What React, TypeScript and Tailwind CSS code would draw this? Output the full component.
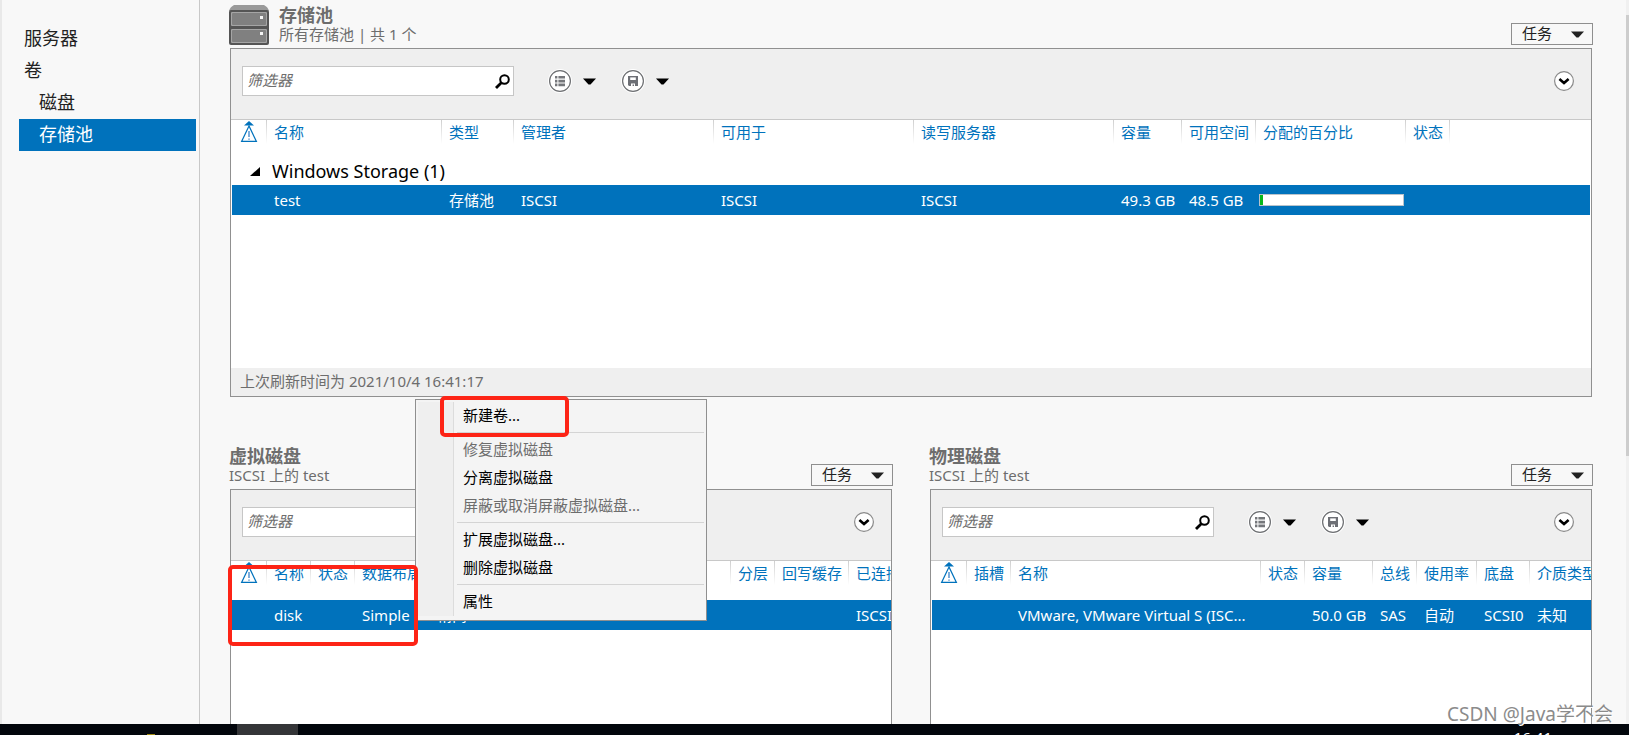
import { ReactNode } from 'react';

type Column = { label: ReactNode; width: string };

type PaneProps = {
  title: string;
  subtitle: string;
  icon?: ReactNode;
  children: ReactNode;
  footer?: string;
  className?: string;
};

/* Small drawings */

function Caret() {
  return (
    <svg viewBox="0 0 13 7" className="h-[7px] w-[13px] shrink-0" fill="currentColor" aria-hidden="true">
      <path d="M0 .5h13L7.500 6.500h-2z" />
    </svg>
  );
}

function SearchIcon() {
  return (
    <svg viewBox="0 0 15 15" className="h-[15px] w-[15px]" fill="none" stroke="#000" aria-hidden="true">
      <circle cx="9.500" cy="5.500" r="4.300" strokeWidth="2" />
      <path d="M6.300 8.700L1 14" strokeWidth="2.800" />
    </svg>
  );
}

function ListIcon() {
  return (
    <svg viewBox="0 0 24 24" className="h-6 w-6" aria-hidden="true">
      <circle cx="12" cy="12" r="12" fill="#fff" />
      <circle cx="12" cy="12" r="10.400" fill="#fff" stroke="#6d6f72" strokeWidth="1.200" />
      <g fill="#75777b">
        <path d="M7 7h2.400v2.600H7zM7 10.800h2.400v2.600H7zM7 14.600h2.400v2.600H7z" />
        <path d="M10.400 7H17v2.600h-6.600zM10.400 10.800H17v2.600h-6.600zM10.400 14.600H17v2.600h-6.600z" />
      </g>
    </svg>
  );
}

function SaveIcon() {
  return (
    <svg viewBox="0 0 24 24" className="h-6 w-6" aria-hidden="true">
      <circle cx="12" cy="12" r="12" fill="#fff" />
      <circle cx="12" cy="12" r="10.400" fill="#fff" stroke="#6d6f72" strokeWidth="1.200" />
      <path d="M7 7h10v10H8l-1-1z" fill="#6d6f75" />
      <path d="M9.200 8.400h5.600v2.600H9.200z" fill="#fff" />
      <path d="M10 14.400h4V17h-1v-1.400h-1.400V17H10z" fill="#fff" />
    </svg>
  );
}

function ExpandIcon() {
  return (
    <svg viewBox="0 0 22 22" className="h-[22px] w-[22px]" aria-hidden="true">
      <circle cx="11" cy="11" r="9.400" fill="#fff" stroke="#8a8a8a" strokeWidth="1.200" />
      <path d="M6.400 9l4.600 4 4.600-4" fill="none" stroke="#000" strokeWidth="2.600" />
    </svg>
  );
}

function WarningIcon() {
  return (
    <svg viewBox="0 0 18 22" className="block h-[22px] w-[18px]" role="img" aria-label="警告">
      <path d="M9 0l5 4.600H4z" fill="#0072bc" />
      <path d="M9 5L1.600 20.400h14.800z" fill="#fff" stroke="#0072bc" strokeWidth="1.200" />
      <path d="M9 10v6M9 17.400v1.400" stroke="#3b83c9" strokeWidth="1.300" />
    </svg>
  );
}

function PoolIcon() {
  return (
    <svg viewBox="0 0 40 40" className="h-10 w-10 shrink-0" aria-hidden="true">
      <path d="M5 0h30q4 2 5 6H0Q1 2 5 0z" fill="#9a9a9a" />
      <rect x="0" y="5" width="40" height="35" rx="2" fill="#555" />
      <rect x="2" y="7" width="36" height="14" rx="1" fill="#a5a5a5" />
      <rect x="3" y="8" width="34" height="12" rx="1" fill="#808080" />
      <rect x="2" y="24" width="36" height="14" rx="1" fill="#a5a5a5" />
      <rect x="3" y="25" width="34" height="12" rx="1" fill="#808080" />
      <path d="M31 11h3v3h-3zM31 27h3v3h-3z" fill="#f4f4f4" />
    </svg>
  );
}

/* Pane pieces */

function FilterBar({ name }: { name: string }) {
  return (
    <div className="flex h-[71px] items-start border-b border-[#c8c8c8] bg-[#efefef] pr-4 pl-[11px]">
      <div className="mt-[17px] flex h-[30px] w-[272px] shrink-0 items-center border border-[#c6c6c6] bg-white pr-[3px]">
        <input
          type="text"
          placeholder="筛选器"
          aria-label={`${name}筛选器`}
          className="h-full min-w-0 flex-1 px-1 pb-[2px] text-[15px] italic outline-none placeholder:text-[#6d6d6d]"
        />
        <button type="button" aria-label="搜索">
          <SearchIcon />
        </button>
      </div>
      <div className="mt-5 ml-[34px] flex items-center">
        <button type="button" aria-label="列表选项" className="flex items-center gap-[11px]">
          <ListIcon />
          <Caret />
        </button>
        <button type="button" aria-label="保存查询" className="ml-[25px] flex items-center gap-[11px]">
          <SaveIcon />
          <Caret />
        </button>
      </div>
      <button type="button" aria-label="展开" className="mt-[21px] ml-auto">
        <ExpandIcon />
      </button>
    </div>
  );
}

function Pane({ title, subtitle, icon, children, footer, className = '' }: PaneProps) {
  return (
    <section className={`flex min-w-0 flex-col ${className}`}>
      <header className="-ml-px flex h-12 shrink-0 items-end justify-between pb-[3px]">
        <div className="flex items-end gap-[10px] text-[#6d6d6d]">
          {icon}
          <div>
            <h2 className="text-lg leading-5 font-bold">{title}</h2>
            <p className="pb-[2px] text-[15px] leading-[18px]">{subtitle}</p>
          </div>
        </div>
        <button
          type="button"
          className="flex h-[22px] w-[82px] items-center justify-between border border-[#8f8f8f] pr-2 pl-[10px] text-[15px] leading-5 text-[#222]"
        >
          <span className="pb-[2px] leading-[18px]">任务</span>
          <Caret />
        </button>
      </header>
      <div className="mr-px flex min-h-0 flex-1 flex-col border border-[#909090] bg-white">
        <FilterBar name={title} />
        <div className="min-h-[248px] flex-1 overflow-hidden px-px">{children}</div>
        {footer && (
          <p className="h-7 shrink-0 bg-[#efefef] px-[9px] text-[15px] leading-[26px] text-[#6d6d6d]">{footer}</p>
        )}
      </div>
    </section>
  );
}

function DataTable({
  columns,
  cells,
  group,
  className,
}: {
  columns: Column[];
  cells: ReactNode[];
  group?: string;
  className: string;
}) {
  return (
    <table className={`table-fixed border-collapse text-left text-[15px] ${className}`}>
      <colgroup>
        {columns.map((col, i) => (
          <col key={i} className={col.width} />
        ))}
      </colgroup>
      <thead>
        <tr className="h-[26px] text-[#0072bc]">
          {columns.map((col, i) => (
            <th
              key={i}
              className={
                i === 0
                  ? 'p-0 pb-[2px] pl-2 font-normal'
                  : 'bg-[linear-gradient(#cfcfcf,#fff)] bg-[length:1px_24px] bg-no-repeat p-0 pb-[2px] pl-2 leading-6 font-normal whitespace-nowrap'
              }
            >
              {col.label}
            </th>
          ))}
        </tr>
      </thead>
      <tbody>
        {group ? (
          <tr className="h-[39px]">
            <td colSpan={columns.length} className="p-0 pt-[11px] pl-[18px]">
              <div className="flex items-center gap-3 text-lg leading-6 text-black">
                <svg viewBox="0 0 10 9" className="h-[9px] w-[10px]" aria-hidden="true">
                  <path d="M10 0v9H0z" fill="#000" />
                </svg>
                {group}
              </div>
            </td>
          </tr>
        ) : (
          <tr className="h-[13px]">
            <td colSpan={columns.length} className="p-0" />
          </tr>
        )}
        <tr className="h-[30px] bg-[#0072bc] text-white">
          {cells.map((cell, i) => (
            <td key={i} className="p-0 pl-2 leading-[30px] whitespace-nowrap">
              {cell}
            </td>
          ))}
        </tr>
      </tbody>
    </table>
  );
}

function UsageBar({ percent }: { percent: number }) {
  return (
    <div className="-ml-1 h-3 w-[145px] border border-[#b9c3cb] bg-white" role="img" aria-label={`${percent}%`}>
      <div className="h-full bg-[#06b81a]" style={{ width: `${percent}%` }} />
    </div>
  );
}

/* Data */

const NAV = [
  { label: '服务器', indent: false },
  { label: '卷', indent: false },
  { label: '磁盘', indent: true },
  { label: '存储池', indent: true, active: true },
];

const POOL_COLUMNS: Column[] = [
  { label: <WarningIcon />, width: 'w-[34px]' },
  { label: '名称', width: 'w-[175px]' },
  { label: '类型', width: 'w-[72px]' },
  { label: '管理者', width: 'w-[200px]' },
  { label: '可用于', width: 'w-[200px]' },
  { label: '读写服务器', width: 'w-[200px]' },
  { label: '容量', width: 'w-[68px]' },
  { label: '可用空间', width: 'w-[74px]' },
  { label: '分配的百分比', width: 'w-[150px]' },
  { label: '状态', width: 'w-[44px]' },
  { label: '', width: 'w-auto' },
];

const VIRTUAL_COLUMNS: Column[] = [
  { label: <WarningIcon />, width: 'w-[34px]' },
  { label: '名称', width: 'w-[44px]' },
  { label: '状态', width: 'w-[44px]' },
  { label: '数据布局', width: 'w-[75px]' },
  { label: '', width: 'w-[301px]' },
  { label: '分层', width: 'w-[44px]' },
  { label: '回写缓存', width: 'w-[74px]' },
  { label: '已连接到', width: 'w-[84px]' },
];

const PHYSICAL_COLUMNS: Column[] = [
  { label: <WarningIcon />, width: 'w-[34px]' },
  { label: '插槽', width: 'w-[44px]' },
  { label: '名称', width: 'w-[250px]' },
  { label: '状态', width: 'w-[44px]' },
  { label: '容量', width: 'w-[68px]' },
  { label: '总线', width: 'w-[44px]' },
  { label: '使用率', width: 'w-[60px]' },
  { label: '底盘', width: 'w-[53px]' },
  { label: '介质类型', width: 'w-[83px]' },
];

const MENU = [
  [{ label: '新建卷...' }],
  [{ label: '修复虚拟磁盘', disabled: true }, { label: '分离虚拟磁盘' }, { label: '屏蔽或取消屏蔽虚拟磁盘...', disabled: true }],
  [{ label: '扩展虚拟磁盘...' }, { label: '删除虚拟磁盘' }],
  [{ label: '属性' }],
];

function ContextMenu() {
  return (
    <div
      role="menu"
      className="absolute top-[399px] left-[415px] flex w-[292px] border border-[#8f8f8f] bg-[#f4f4f4] p-[2px] pb-1 text-[15px]"
    >
      <div className="w-9 shrink-0 border-r border-[#dcdcdc] bg-[#efefef]" />
      <div className="flex-1 pl-[3px]">
        {MENU.map((items, g) => (
          <div key={g}>
            {g > 0 && <hr className="mt-[2px] mb-[3px] h-px border-0 bg-[#d4d4d4]" />}
            {items.map((item) => (
              <button
                key={item.label}
                type="button"
                role="menuitem"
                disabled={item.disabled}
                className="block h-7 w-full pb-[2px] pl-[6px] text-left leading-[26px] text-black disabled:text-[#6d6d6d]"
              >
                {item.label}
              </button>
            ))}
          </div>
        ))}
      </div>
    </div>
  );
}

export default function App() {
  return (
    <div className="relative flex h-screen flex-col overflow-hidden bg-[#f8f8f8] font-['Noto_Sans','Noto_Sans_CJK_SC',sans-serif]">
      <div className="flex min-h-0 flex-1 overflow-hidden">
        <nav className="w-[200px] shrink-0 border-r border-l-2 border-r-[#c8c8c8] border-l-[#e9e9e9] pt-[23px] pr-[3px] pl-[17px] text-lg text-[#222]">
          {NAV.map((item) => (
            <a
              key={item.label}
              href="#"
              className={`block h-8 leading-[30px] ${item.indent ? 'pl-5' : 'pl-[5px]'} ${item.active ? 'bg-[#0072bc] text-white' : ''}`}
            >
              {item.label}
            </a>
          ))}
        </nav>

        <main className="flex min-w-0 flex-1 flex-col pr-[33px] pl-[30px]">
          <Pane
            title="存储池"
            subtitle="所有存储池 | 共 1 个"
            icon={<PoolIcon />}
            footer="上次刷新时间为 2021/10/4 16:41:17"
            className="shrink-0"
          >
            <DataTable
              className="w-full"
              columns={POOL_COLUMNS}
              group="Windows Storage (1)"
              cells={['', 'test', '存储池', 'ISCSI', 'ISCSI', 'ISCSI', '49.3 GB', '48.5 GB', <UsageBar percent={2} />, '', '']}
            />
          </Pane>

          <div className="mt-11 grid grid-cols-2 gap-[37px]">
            <Pane title="虚拟磁盘" subtitle="ISCSI 上的 test">
              <DataTable
                className="w-[700px]"
                columns={VIRTUAL_COLUMNS}
                cells={['', 'disk', '', 'Simple', '精简', '', '', 'ISCSI']}
              />
            </Pane>
            <Pane title="物理磁盘" subtitle="ISCSI 上的 test">
              <DataTable
                className="w-[680px]"
                columns={PHYSICAL_COLUMNS}
                cells={['', '', 'VMware, VMware Virtual S (ISC...', '', '50.0 GB', 'SAS', '自动', 'SCSI0', '未知']}
              />
            </Pane>
          </div>
        </main>

        {/* Window scroll bar */}
        <div className="w-[3px] shrink-0 bg-[#f0f0f0] pt-[15px]">
          <div className="h-[441px] bg-[#cdcdcd]" />
        </div>
      </div>

      {/* Taskbar */}
      <footer className="flex h-[11px] shrink-0 items-start overflow-hidden bg-[#02060c]">
        <div className="ml-[147px] h-px w-2 self-end bg-[#a08a10]" />
        <div className="ml-[82px] h-full w-[61px] bg-[#343538]" />
        <time className="mt-[3px] mr-[77px] ml-auto text-[15px] leading-5 text-white">16:41</time>
      </footer>

      <ContextMenu />

      {/* Highlight frames */}
      <div className="absolute top-[396px] left-[440px] h-[41px] w-[129px] rounded-[5px] border-4 border-[#fd2416]" />
      <div className="absolute top-[565px] left-[228px] h-[81px] w-[190px] rounded-[5px] border-4 border-[#fd2416]" />

      <p className="absolute right-4 bottom-[9px] text-[19px] leading-6 text-[#8b8b8b] [text-shadow:1px_1px_0_#fff]">
        CSDN @Java学不会
      </p>
    </div>
  );
}
